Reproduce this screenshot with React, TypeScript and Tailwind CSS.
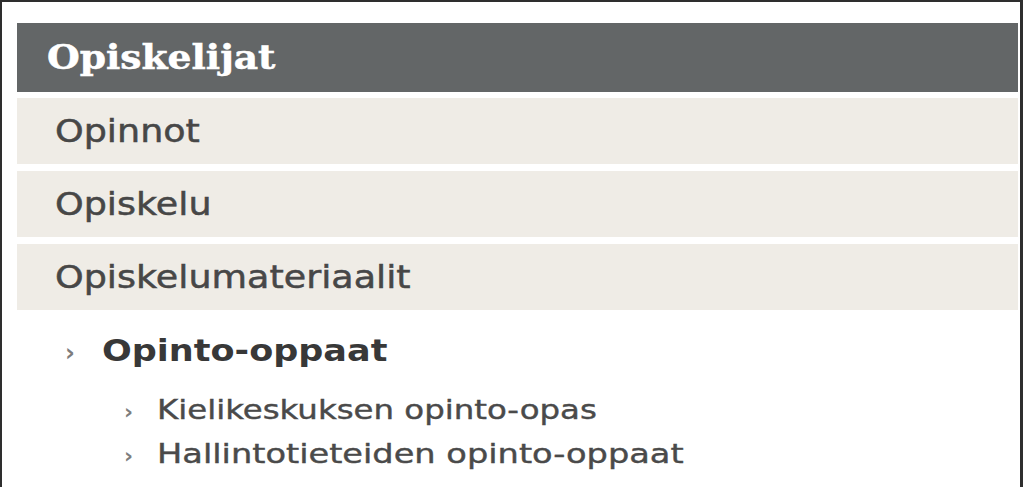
import React from 'react';

const rows = ['Opinnot', 'Opiskelu', 'Opiskelumateriaalit'];

const subItems = [
  { label: 'Kielikeskuksen opinto-opas', wide: false },
  { label: 'Hallintotieteiden opinto-oppaat', wide: true },
];

const Chevron: React.FC<{ className?: string }> = ({ className }) => (
  <span className={`text-[#7d7d7d] font-bold ${className ?? ''}`}>›</span>
);

const App: React.FC = () => {
  return (
    <div
      className="w-[1023px] h-[487px] overflow-hidden bg-white border-l-2 border-t-2 border-r-[3px] border-[#2e2e2e] pl-[15px] pr-[2px] pt-[21px]"
      style={{ fontFamily: '"DejaVu Sans", Verdana, sans-serif' }}
    >
      <div className="h-[69px] bg-[#636667] flex items-center pl-[30px]">
        <span
          className="inline-block origin-left scale-x-[1.14] text-white font-bold text-[33px] leading-none [-webkit-text-stroke:0.5px_white]"
          style={{ fontFamily: '"DejaVu Serif", Georgia, serif' }}
        >
          Opiskelijat
        </span>
      </div>

      <div className="flex flex-col gap-[7px] mt-[6px]">
        {rows.map((label) => (
          <div key={label} className="h-[66px] bg-[#efece6] flex items-center pl-[38px]">
            <span className="inline-block origin-left scale-x-[1.14] text-[32px] leading-none text-[#474747] [-webkit-text-stroke:0.5px_#474747]">
              {label}
            </span>
          </div>
        ))}
      </div>

      <div className="mt-[20px] pl-[48px]">
        <div className="flex items-baseline h-[40px] leading-[40px]">
          <Chevron className="text-[24px] w-[37px]" />
          <span className="inline-block origin-left scale-x-[1.13] font-bold text-[31px] text-[#383838]">
            Opinto-oppaat
          </span>
        </div>
        <ul className="mt-[18px] pl-[59px]">
          {subItems.map((item) => (
            <li key={item.label} className="flex items-baseline h-[44px] leading-[44px]">
              <Chevron className="text-[22px] w-[33px]" />
              <span
                className={`inline-block origin-left text-[27px] text-[#4a4a4a] [-webkit-text-stroke:0.4px_#4a4a4a] ${
                  item.wide ? 'scale-x-[1.245]' : 'scale-x-[1.2]'
                }`}
              >
                {item.label}
              </span>
            </li>
          ))}
        </ul>
      </div>
    </div>
  );
};

export default App;
